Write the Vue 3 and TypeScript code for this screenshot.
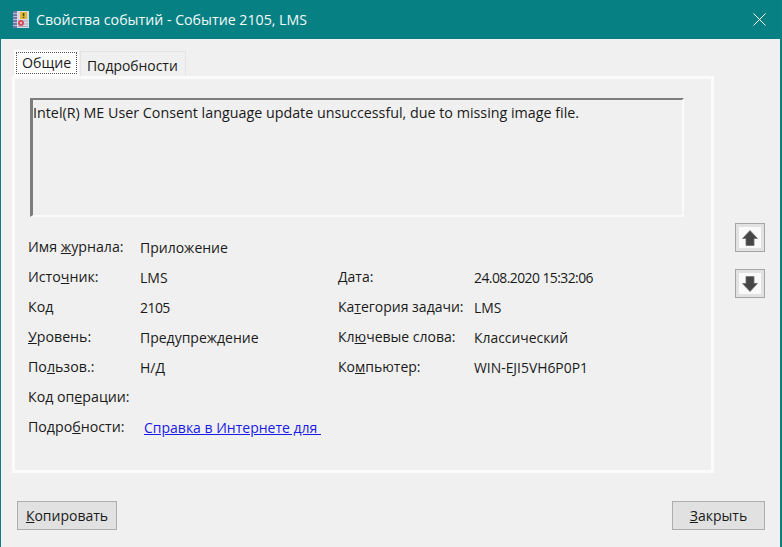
<script setup lang="ts">
interface Cell { before: string; key: string; after: string; value: string; tight?: boolean }
const left: Cell[] = [
  { before: 'Имя ', key: 'ж', after: 'урнала:', value: 'Приложение' },
  { before: 'Исто', key: 'ч', after: 'ник:', value: 'LMS' },
  { before: 'Код', key: '', after: '', value: '2105', tight: true },
  { before: '', key: 'У', after: 'ровень:', value: 'Предупреждение' },
  { before: 'По', key: 'л', after: 'ьзов.:', value: 'Н/Д' },
  { before: 'Код оп', key: 'е', after: 'рации:', value: '' },
]
const right: Cell[] = [
  { before: '', key: 'Д', after: 'ата:', value: '24.08.2020 15:32:06', tight: true },
  { before: 'Ка', key: 'т', after: 'егория задачи:', value: 'LMS' },
  { before: 'Кл', key: 'ю', after: 'чевые слова:', value: 'Классический' },
  { before: 'Ко', key: 'м', after: 'пьютер:', value: 'WIN-EJI5VH6P0P1' },
]
</script>

<template>
  <div class="window">
    <header class="titlebar">
      <svg class="app-icon" width="18" height="18" viewBox="0 0 18 18">
        <rect x="0" y="0" width="16" height="17" fill="#dcd8e2" />
        <rect x="0" y="0" width="4" height="17" fill="#7077a6" />
        <path d="M0 2.500h4M0 5.500h4M0 8.500h4M0 11.500h4M0 14.500h4" stroke="#b8bbd4" stroke-width="1" />
        <path d="M5 10h10M5 13h10M5 15.500h10" stroke="#a9a8c0" stroke-width="1" />
        <rect x="7" y="1" width="7" height="7" fill="#dcb93a" />
        <rect x="9.800" y="2" width="1.500" height="3" fill="#5a4a10" />
        <rect x="9.800" y="5.800" width="1.500" height="1.200" fill="#5a4a10" />
        <circle cx="8" cy="12" r="3" fill="#d0505a" />
        <circle cx="8" cy="12" r="1" fill="#f6d5d5" />
      </svg>
      <span class="title">Свойства событий - Событие 2105, LMS</span>
      <svg class="close" width="13" height="13" viewBox="0 0 13 13">
        <path d="M.5.5l12 12M12.500.5l-12 12" stroke="#fff" stroke-width="1" fill="none" />
      </svg>
    </header>

    <main class="content">
      <div class="tabs-row">
        <section class="tabs">
          <div class="tab-strip">
            <div class="tab active"><span class="focus">Общие</span></div>
            <div class="tab">Подробности</div>
          </div>
          <div class="panel">
            <div class="message">Intel(R) ME User Consent language update unsuccessful, due to missing image file.</div>
            <div class="fields">
              <div class="col col-left">
                <div v-for="c in left" :key="c.value + c.after" class="row">
                  <span class="label">{{ c.before }}<u>{{ c.key }}</u>{{ c.after }}</span>
                  <span class="value" :class="{ tight: c.tight }">{{ c.value }}</span>
                </div>
                <div class="row">
                  <span class="label">Подро<u>б</u>ности:</span>
                  <a class="link">Справка в Интернете для&nbsp;</a>
                </div>
              </div>
              <div class="col col-right">
                <div v-for="c in right" :key="c.after" class="row">
                  <span class="label">{{ c.before }}<u>{{ c.key }}</u>{{ c.after }}</span>
                  <span class="value" :class="{ tight: c.tight }">{{ c.value }}</span>
                </div>
              </div>
            </div>
          </div>
        </section>
        <aside class="arrows">
          <div class="arrow">
            <svg width="18" height="18" viewBox="0 0 18 18"><path d="M9 1.500L16.500 9.500H13V16.500H5V9.500H1.500Z" fill="#464646" stroke="#707070" stroke-width=".8" /></svg>
          </div>
          <div class="arrow">
            <svg width="18" height="18" viewBox="0 0 18 18"><path d="M9 16.500L16.500 8.500H13V1.500H5V8.500H1.500Z" fill="#464646" stroke="#707070" stroke-width=".8" /></svg>
          </div>
        </aside>
      </div>
      <footer class="buttons">
        <div class="btn copy"><u>К</u>опировать</div>
        <div class="btn closebtn"><u>З</u>акрыть</div>
      </footer>
    </main>
  </div>
</template>

<style>
html, body { margin: 0; padding: 0; }
</style>

<style scoped>
.window {
  width: 782px;
  height: 547px;
  box-sizing: border-box;
  display: flex;
  flex-direction: column;
  background: #f0f0f0;
  border: solid #0b8083;
  border-width: 0 2px 0 1px;
  font-family: "Open Sans", "Noto Sans", sans-serif;
  font-size: 14px;
  color: #1a1a1a;
  overflow: hidden;
}
.titlebar {
  height: 39px;
  flex: none;
  display: flex;
  align-items: center;
  background: #078083;
  color: #f2fafa;
  padding: 0 14px 0 12px;
  font-size: 14.2px;
}
.app-icon { flex: none; margin-right: 5px; }
.title { flex: 1; white-space: nowrap; }
.close { flex: none; }
.content {
  flex: 1;
  display: flex;
  flex-direction: column;
  padding: 13px 15px 17px 11px;
  min-height: 0;
}
.tabs-row { display: flex; flex: none; }
.tabs { width: 702px; flex: none; }
.tab-strip { display: flex; height: 24px; align-items: flex-end; padding-left: 2px; }
.tab {
  box-sizing: border-box;
  width: 106px;
  height: 25px;
  padding: 4px 0 0 6px;
  background: #f0f0f0;
  border: 1px solid #e4e4e4;
  border-bottom: 0;
  font-size: 13.9px;
  line-height: 20px;
  white-space: nowrap;
}
.tab.active {
  width: 65px;
  height: 26px;
  padding: 2px;
  background: #fff;
  border: 0;
  margin-right: 1px;
}
.focus {
  display: block;
  height: 22px;
  box-sizing: border-box;
  border: 1px dotted #555;
  padding-left: 5px;
  line-height: 19px;
  font-size: 14.2px;
  background: #fff;
}
.panel {
  box-sizing: border-box;
  height: 397px;
  background: #f0f0f0;
  border: 3px solid #fbfbfb;
  padding: 19px 27px 0 15px;
}
.message {
  box-sizing: border-box;
  height: 119px;
  background: #f0f0f0;
  border-style: solid;
  border-width: 2px 2px 2px 3px;
  border-color: #7d7d7d #fafafa #fafafa #7d7d7d;
  padding: 2px 0 0 0;
  font-size: 14.3px;
  line-height: 22px;
  white-space: nowrap;
}
.fields { display: flex; margin-top: 15px; margin-left: -2px; }
.col { display: flex; flex-direction: column; }
.col-left { width: 310px; flex: none; }
.col-right { padding-top: 30px; }
.row { height: 30px; display: flex; align-items: center; white-space: nowrap; }
.col-left .label { width: 112px; flex: none; font-size: 14.2px; }
.col-right .label { width: 136px; flex: none; }
.label { font-size: 14px; position: relative; top: -1px; }
.value { font-size: 14px; }
.col-right .value { font-size: 13.9px; }
.value.tight { letter-spacing: -0.55px; }
.link { color: #1a1ae6; text-decoration: underline; margin-left: 4px; font-size: 14px; }
.arrows {
  flex: none;
  display: flex;
  flex-direction: column;
  gap: 17px;
  margin: 171px 0 0 21px;
}
.arrow {
  box-sizing: border-box;
  width: 30px;
  height: 29px;
  background: #fafafa;
  border: 1px solid #a5a5a5;
  box-shadow: inset 0 0 0 3px #e2e2e2;
  display: flex;
  align-items: center;
  justify-content: center;
}
.buttons {
  margin-top: 28px;
  display: flex;
  justify-content: space-between;
  padding: 0 0 0 5px;
}
.btn {
  box-sizing: border-box;
  height: 29px;
  background: #e1e1e1;
  border: 1px solid #adadad;
  font-size: 14px;
  line-height: 27px;
  text-align: center;
}
.copy { width: 100px; }
.closebtn { width: 93px; }
</style>
